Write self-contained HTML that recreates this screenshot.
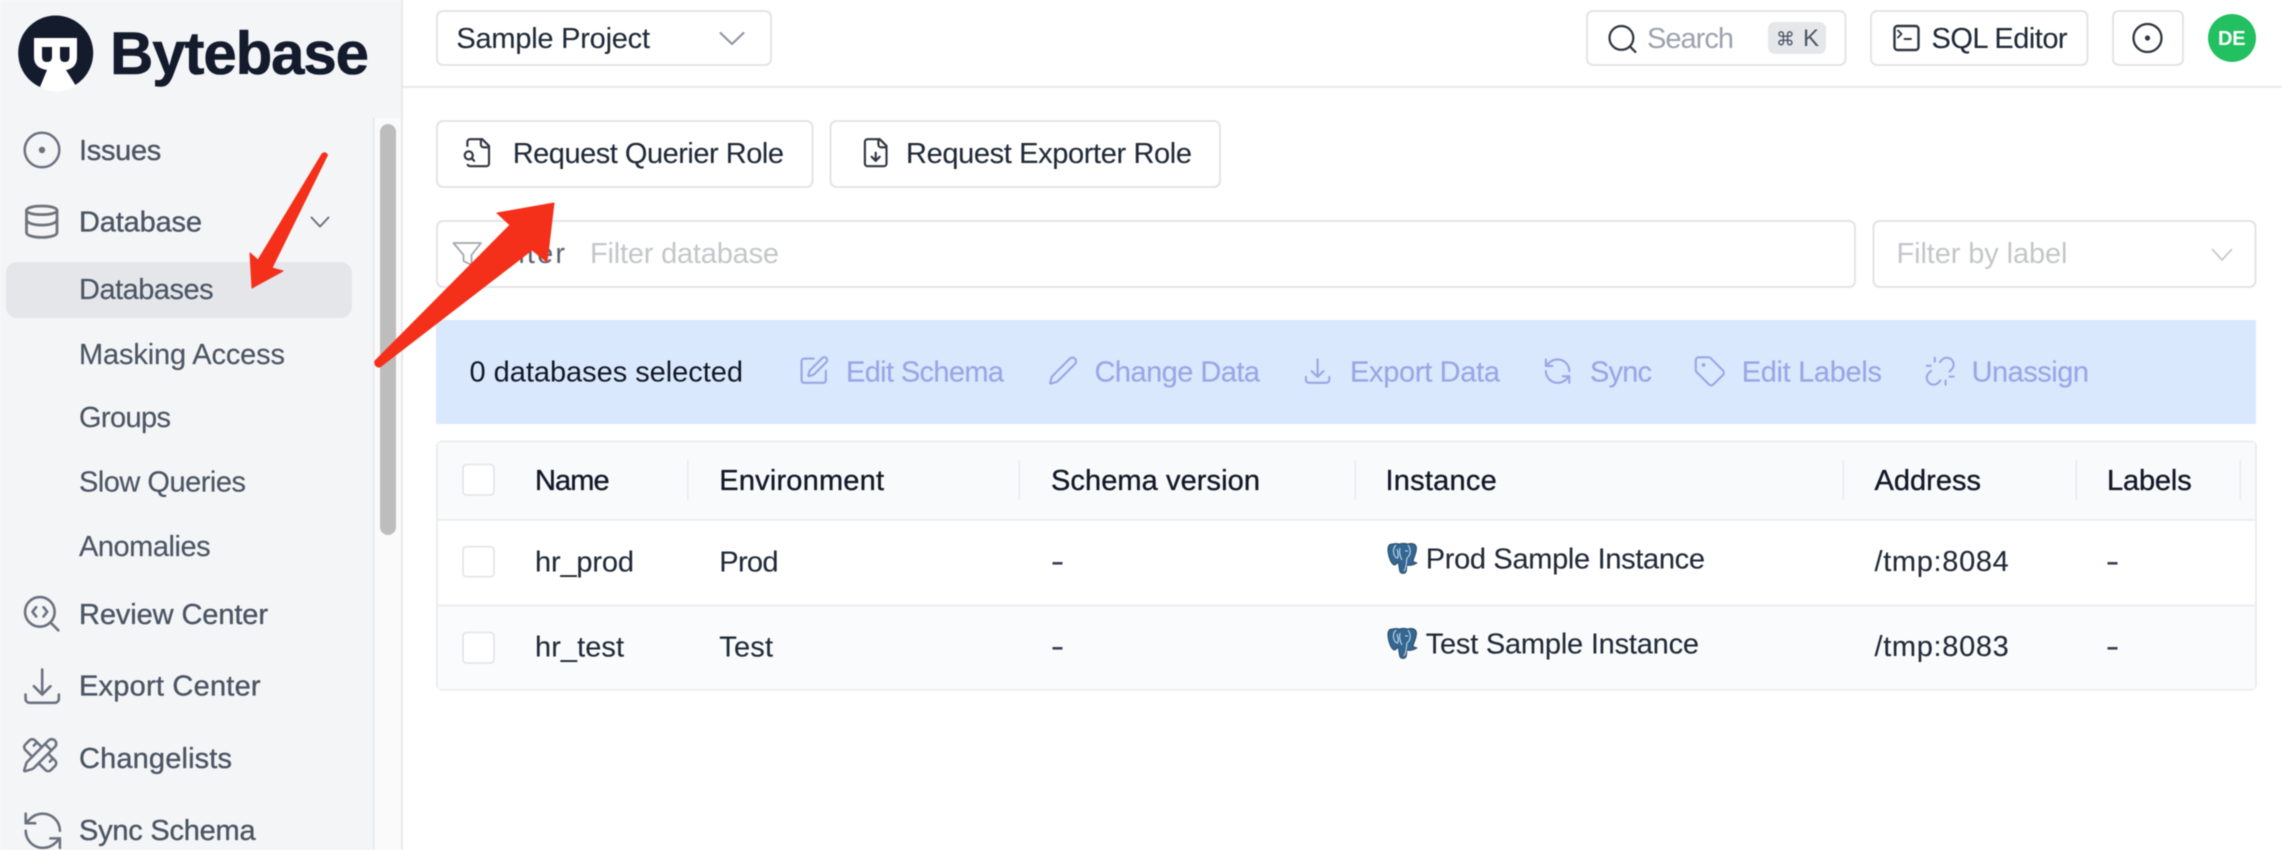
<!DOCTYPE html>
<html lang="en">
<head>
<meta charset="utf-8">
<title>Bytebase - Databases</title>
<style>
html,body{margin:0;padding:0;background:#fff;width:2282px;height:850px;overflow:hidden}
svg{display:block;filter:blur(.45px)}
text{font-family:"Liberation Sans",sans-serif;font-size:29px;white-space:pre}
.nav{fill:#4b5563;stroke:#4b5563;stroke-width:.35}
.nav2{fill:#4b5563;stroke:#4b5563;stroke-width:.15}
.dk{fill:#1f2937;stroke:#1f2937;stroke-width:.1}
.hd{fill:#111827;stroke:#111827;stroke-width:.35}
.act{fill:#9aa6e6;stroke:#9aa6e6;stroke-width:.15}
.ph{fill:#c4c6ca}
.box{fill:#fff;stroke:#e3e4e6;stroke-width:2}
.ic{fill:none;stroke-linecap:round;stroke-linejoin:round}
.g{stroke:#6b7280}
.d{stroke:#303641}
.a{stroke:#9aa6e6}
.cb{fill:#fff;stroke:#e2e3e7;stroke-width:1.6}
</style>
</head>
<body>
<svg width="2282" height="850" viewBox="0 0 2282 850" xmlns="http://www.w3.org/2000/svg">
<!-- sidebar -->
<rect x="0" y="0" width="401" height="850" fill="#f4f5f7"/>
<rect x="401" y="0" width="2" height="850" fill="#e8e9eb"/>
<rect x="373" y="118" width="28" height="732" fill="#fafafb"/>
<rect x="373" y="118" width="1.5" height="732" fill="#e6e7ea"/>
<rect x="380" y="124" width="16" height="411" rx="8" fill="#bdbdbd"/>
<rect x="6" y="262" width="346" height="56" rx="11" fill="#e5e6ea"/>

<!-- logo -->
<circle cx="55.7" cy="53" r="37.5" fill="#131b2c"/>
<path d="M34 38H77V57Q77 68 66 70L76 86Q57 97 40 87L47 70Q34 68 34 57Z" fill="#fff"/>
<path d="M42 47H52V57Q52 62 47 62Q42 62 42 57Z" fill="#131b2c"/>
<path d="M60 47H69.500V57Q69.500 62 64.800 62Q60 62 60 57Z" fill="#131b2c"/>
<text x="110" y="74" textLength="259" lengthAdjust="spacing" style="font-size:60px;font-weight:700;fill:#131b2c;stroke:#131b2c;stroke-width:.6">Bytebase</text>

<!-- nav icons -->
<circle cx="42" cy="150" r="17.300" class="ic g" stroke-width="2.500"/>
<circle cx="42" cy="150" r="3.200" fill="#6b7280"/>
<g class="ic" stroke="#6f747c" stroke-width="2.800">
<path d="M26.500 210.500C26.500 204.500 57 204.500 57 210.500V232.500C57 239 26.500 239 26.500 232.500Z"/>
<path d="M26.500 210.500C26.500 216 57 216 57 210.500"/>
<path d="M26.500 219.500C26.500 227 57 227 57 219.500"/>
</g>
<path d="M311.500 217.500L320 226.500L328.500 217.500" class="ic" stroke="#6b7280" stroke-width="2"/>
<g transform="translate(19.500,591.500) scale(1.850)" class="ic g" stroke-width="1.400"><path d="m13 13.500 2-2.500-2-2.500"/><path d="m21 21-4.300-4.300"/><path d="M9 8.500 7 11l2 2.500"/><circle cx="11" cy="11" r="8"/></g>
<g transform="translate(20,664) scale(1.850)" class="ic g" stroke-width="1.400"><path d="M3 16.500v2.250A2.250 2.250 0 005.250 21h13.500A2.250 2.250 0 0021 18.750V16.500M16.500 12L12 16.500m0 0L7.500 12m4.500 4.500V3"/></g>
<g transform="translate(21,736) scale(1.600)" class="ic g" stroke-width="1.600"><path d="M13 7 8.700 2.700a2.410 2.410 0 0 0-3.400 0L2.700 5.300a2.410 2.410 0 0 0 0 3.400L7 13"/><path d="m8 6 2-2"/><path d="m18 16 2-2"/><path d="m17 11 4.300 4.300c.94.94.94 2.460 0 3.400l-2.600 2.600c-.94.94-2.460.94-3.400 0L11 17"/><path d="M21.174 6.812a1 1 0 0 0-3.986-3.987L3.842 16.174a2 2 0 0 0-.5.830l-1.321 4.352a.5.500 0 0 0 .623.622l4.353-1.320a2 2 0 0 0 .830-.497z"/><path d="m15 5 4 4"/></g>
<g transform="translate(20,808) scale(1.900)" class="ic g" stroke-width="1.350"><path d="M21 12a9 9 0 0 0-9-9 9.750 9.750 0 0 0-6.740 2.740L3 8"/><path d="M3 3v5h5"/><path d="M3 12a9 9 0 0 0 9 9 9.750 9.750 0 0 0 6.740-2.740L21 16"/><path d="M16 16h5v5"/></g>

<!-- nav text -->
<text x="79" y="160" textLength="82.300" class="nav">Issues</text>
<text x="79" y="231.700" textLength="123" class="nav">Database</text>
<text x="79" y="299" textLength="134.600" class="nav2">Databases</text>
<text x="79" y="364" textLength="206" class="nav2">Masking Access</text>
<text x="79" y="427" textLength="92" class="nav2">Groups</text>
<text x="79" y="491.700" textLength="167" class="nav2">Slow Queries</text>
<text x="79" y="556" textLength="131.600" class="nav2">Anomalies</text>
<text x="79" y="624" textLength="189" class="nav">Review Center</text>
<text x="79" y="695.700" textLength="181.600" class="nav">Export Center</text>
<text x="79" y="768" textLength="153" class="nav">Changelists</text>
<text x="79" y="840" textLength="176.600" class="nav">Sync Schema</text>

<!-- top bar -->
<rect x="403" y="86" width="1879" height="2" fill="#e7e8ea"/>
<rect x="437" y="11" width="334" height="54" rx="6" class="box"/>
<text x="456.400" y="48" textLength="193.600" class="dk">Sample Project</text>
<path d="M720.500 33L732 44L743.500 33" class="ic" stroke="#8f96a3" stroke-width="2.200"/>

<rect x="1587" y="11" width="258.500" height="54" rx="6" class="box"/>
<g transform="translate(1606,22.500) scale(1.400)" class="ic d" stroke-width="1.600"><circle cx="11" cy="11" r="8.500"/><path d="m21 21-3.800-3.800"/></g>
<text x="1647" y="48" textLength="87" style="fill:#9ca3af">Search</text>
<rect x="1768" y="22" width="58" height="32" rx="7" fill="#e5e7eb"/>
<text x="1776" y="45.500" style="font-family:'DejaVu Sans',sans-serif;font-size:19px;fill:#4b5563">⌘</text>
<text x="1803" y="46" style="font-size:24px;fill:#4b5563">K</text>

<rect x="1871" y="11" width="216.500" height="54" rx="6" class="box"/>
<rect x="1894.500" y="26" width="24" height="24" rx="3" class="ic d" stroke-width="2.400"/>
<path d="M1898 30.500L1901.500 34L1898 37.500M1904.500 39H1911" class="ic d" stroke-width="1.900"/>
<text x="1931.500" y="48" textLength="136.100" class="dk">SQL Editor</text>

<rect x="2113" y="11" width="70" height="54" rx="6" class="box"/>
<circle cx="2147.500" cy="38" r="14" class="ic d" stroke-width="2.300"/>
<circle cx="2147.500" cy="38" r="2.600" fill="#303641"/>
<circle cx="2232" cy="38" r="24" fill="#22c061"/>
<text x="2218" y="45" textLength="27.600" style="font-size:20px;font-weight:700;fill:#fff">DE</text>

<!-- buttons -->
<rect x="437" y="121" width="375.500" height="66" rx="6" class="box"/>
<g transform="translate(462,136.500) scale(1.350)" class="ic d" stroke-width="1.600"><path d="M14 2v4a2 2 0 0 0 2 2h4"/><path d="M4.268 21a2 2 0 0 0 1.727 1H18a2 2 0 0 0 2-2V7l-5-5H6a2 2 0 0 0-2 2v3"/><path d="m9 18-1.500-1.500"/><circle cx="5" cy="14" r="3"/></g>
<text x="512.700" y="163" textLength="271.300" class="dk">Request Querier Role</text>
<rect x="830.500" y="121" width="389.500" height="66" rx="6" class="box"/>
<g transform="translate(859.500,136.500) scale(1.350)" class="ic d" stroke-width="1.600"><path d="M15 2H6a2 2 0 0 0-2 2v16a2 2 0 0 0 2 2h12a2 2 0 0 0 2-2V7Z"/><path d="M14 2v4a2 2 0 0 0 2 2h4"/><path d="M12 18v-6"/><path d="m9 15 3 3 3-3"/></g>
<text x="906" y="163" textLength="286" class="dk">Request Exporter Role</text>

<!-- filter -->
<rect x="437" y="221" width="1418" height="66" rx="6" class="box"/>
<path d="M453.500 243H481L471.500 255V265L463.500 261V255Z" class="ic" stroke="#a3a7ad" stroke-width="1.800"/>
<text x="490" y="263" textLength="75" style="fill:#5b6270">Filter</text>
<text x="590" y="263" textLength="189" class="ph">Filter database</text>
<rect x="1873.500" y="221" width="382" height="66" rx="6" class="box"/>
<text x="1896.500" y="263" textLength="171" class="ph">Filter by label</text>
<path d="M2212.500 249.500L2222 260L2231.500 249.500" class="ic" stroke="#c6c8cc" stroke-width="1.700"/>

<!-- banner -->
<rect x="436" y="320" width="1820" height="104" fill="#d9e8fd"/>
<text x="469.500" y="381.700" textLength="273.500" style="fill:#111827">0 databases selected</text>
<g transform="translate(797.500,354.500) scale(1.350)" class="ic a" stroke-width="1.600"><path d="M12 3H5a2 2 0 0 0-2 2v14a2 2 0 0 0 2 2h14a2 2 0 0 0 2-2v-7"/><path d="M18.375 2.625a1 1 0 0 1 3 3l-9.013 9.014a2 2 0 0 1-.853.505l-2.873.84a.5.5 0 0 1-.62-.62l.84-2.873a2 2 0 0 1 .506-.852z"/></g>
<text x="846" y="381.700" textLength="158" class="act">Edit Schema</text>
<g transform="translate(1047.500,355) scale(1.300)" class="ic a" stroke-width="1.600"><path d="M21.174 6.812a1 1 0 0 0-3.986-3.987L3.842 16.174a2 2 0 0 0-.5.830l-1.321 4.352a.5.500 0 0 0 .623.622l4.353-1.320a2 2 0 0 0 .830-.497z"/></g>
<text x="1094.500" y="381.700" textLength="165.500" class="act">Change Data</text>
<g transform="translate(1302,355.500) scale(1.300)" class="ic a" stroke-width="1.600"><path d="M3 16.500v2.250A2.250 2.250 0 005.250 21h13.500A2.250 2.250 0 0021 18.750V16.500M16.500 12L12 16.500m0 0L7.500 12m4.500 4.500V3"/></g>
<text x="1350" y="381.700" textLength="150" class="act">Export Data</text>
<g transform="translate(1542,355.500) scale(1.300)" class="ic a" stroke-width="1.600"><path d="M21 12a9 9 0 0 0-9-9 9.750 9.750 0 0 0-6.740 2.740L3 8"/><path d="M3 3v5h5"/><path d="M3 12a9 9 0 0 0 9 9 9.750 9.750 0 0 0 6.740-2.740L21 16"/><path d="M16 16h5v5"/></g>
<text x="1590" y="381.700" textLength="62" class="act">Sync</text>
<g transform="translate(1693,354.500) scale(1.400)" class="ic a" stroke-width="1.500"><path d="M12.586 2.586A2 2 0 0 0 11.172 2H4a2 2 0 0 0-2 2v7.172a2 2 0 0 0 .586 1.414l8.704 8.704a2.426 2.426 0 0 0 3.420 0l6.580-6.580a2.426 2.426 0 0 0 0-3.420z"/><circle cx="7.500" cy="7.500" r=".6"/></g>
<text x="1741.700" y="381.700" textLength="140.300" class="act">Edit Labels</text>
<g transform="translate(1924,355) scale(1.350)" class="ic a" stroke-width="1.500"><path d="m18.840 12.250 1.720-1.710h-.02a5.004 5.004 0 0 0-.12-7.070 5.006 5.006 0 0 0-6.950 0l-1.720 1.710"/><path d="m5.170 11.750-1.710 1.710a5.004 5.004 0 0 0 .12 7.070 5.006 5.006 0 0 0 6.950 0l1.710-1.710"/><path d="M8 2v3"/><path d="M2 8h3"/><path d="M16 19v3"/><path d="M19 16h3"/></g>
<text x="1971.600" y="381.700" textLength="117.400" class="act">Unassign</text>

<!-- table -->
<rect x="437" y="441.500" width="1819" height="248" rx="5" fill="#fff" stroke="#e9eaec" stroke-width="1.800"/>
<rect x="438" y="442.500" width="1817" height="76.500" fill="#f9fafc"/>
<rect x="438" y="606" width="1817" height="83" fill="#fafbfc"/>
<rect x="437" y="519" width="1819" height="2" fill="#eceef0"/>
<rect x="437" y="604.500" width="1819" height="2" fill="#eceef0"/>
<g fill="#e9ebee">
<rect x="687" y="460" width="1.600" height="40"/>
<rect x="1018.500" y="460" width="1.600" height="40"/>
<rect x="1354.500" y="460" width="1.600" height="40"/>
<rect x="1842.500" y="460" width="1.600" height="40"/>
<rect x="2075.500" y="460" width="1.600" height="40"/>
<rect x="2239.500" y="460" width="1.600" height="40"/>
</g>
<rect x="463" y="464.500" width="31" height="30.500" rx="3.500" class="cb"/>
<rect x="463" y="546.700" width="31" height="30" rx="3.500" class="cb"/>
<rect x="463" y="632.500" width="31" height="30.500" rx="3.500" class="cb"/>

<text x="535" y="490" textLength="74.600" class="hd">Name</text>
<text x="719.300" y="490" textLength="164.700" class="hd">Environment</text>
<text x="1051" y="490" textLength="209" class="hd">Schema version</text>
<text x="1385.500" y="490" textLength="111.300" class="hd">Instance</text>
<text x="1874.500" y="490" textLength="106.500" class="hd">Address</text>
<text x="2107" y="490" textLength="84.700" class="hd">Labels</text>

<text x="535" y="571.700" textLength="99" class="dk">hr_prod</text>
<text x="719.300" y="571.700" textLength="59.200" class="dk">Prod</text>
<rect x="1052.500" y="562" width="10" height="2.600" fill="#374151"/>
<text x="1425.700" y="568.300" textLength="279.300" class="dk">Prod Sample Instance</text>
<text x="1874.500" y="571" textLength="134.300" class="dk">/tmp:8084</text>
<rect x="2107.500" y="562" width="10" height="2.600" fill="#374151"/>

<text x="535" y="656.700" textLength="89" class="dk">hr_test</text>
<text x="719.300" y="656.700" textLength="53.700" class="dk">Test</text>
<rect x="1052.500" y="647" width="10" height="2.600" fill="#374151"/>
<text x="1425.700" y="653.300" textLength="273.300" class="dk">Test Sample Instance</text>
<text x="1874.500" y="656" textLength="134.300" class="dk">/tmp:8083</text>
<rect x="2107.500" y="647" width="10" height="2.600" fill="#374151"/>

<!-- postgres elephants -->
<g transform="translate(1386,543)">
<path d="M6 1C2 1 1.500 5 2 9C2.500 14 5 21 8 22C10 22.500 11 20 12 19C13 22 13 27 14 29C15 31 19 31 20 29C21 27 20.500 24 21 22C24 23 28 22 31 20L27 18.500C28 14 31 9 30.500 4.500C30 1 26 -.5 22 1C19 0 16 0 13 1C11 0 8 .5 6 1Z" fill="#336791" stroke="#22364d" stroke-width=".7"/>
<path d="M10 2C6 6 7 13 11 15C13 15.500 12 9 11 6M22 2C25 6 25 12 21 15C20 19 21 24 18 28M14 5C13 9 14 14 16 17M19 8H22" fill="none" stroke="#cfe0ef" stroke-width="1"/>
</g>
<g transform="translate(1386,628)">
<path d="M6 1C2 1 1.500 5 2 9C2.500 14 5 21 8 22C10 22.500 11 20 12 19C13 22 13 27 14 29C15 31 19 31 20 29C21 27 20.500 24 21 22C24 23 28 22 31 20L27 18.500C28 14 31 9 30.500 4.500C30 1 26 -.5 22 1C19 0 16 0 13 1C11 0 8 .5 6 1Z" fill="#336791" stroke="#22364d" stroke-width=".7"/>
<path d="M10 2C6 6 7 13 11 15C13 15.500 12 9 11 6M22 2C25 6 25 12 21 15C20 19 21 24 18 28M14 5C13 9 14 14 16 17M19 8H22" fill="none" stroke="#cfe0ef" stroke-width="1"/>
</g>

<!-- red annotation arrows -->
<path d="M322 154Q325 151 327.500 155L272 268L283 271L252 288L250 253L258 260Z" fill="#f5301a" stroke="#f5301a" stroke-linejoin="round"/>
<path d="M375 361L510 225L497 213L554 203L547 262L532 250L380 367Q374 367 375 361Z" fill="#f5301a" stroke="#f5301a" stroke-linejoin="round"/>
</svg>
</body>
</html>
